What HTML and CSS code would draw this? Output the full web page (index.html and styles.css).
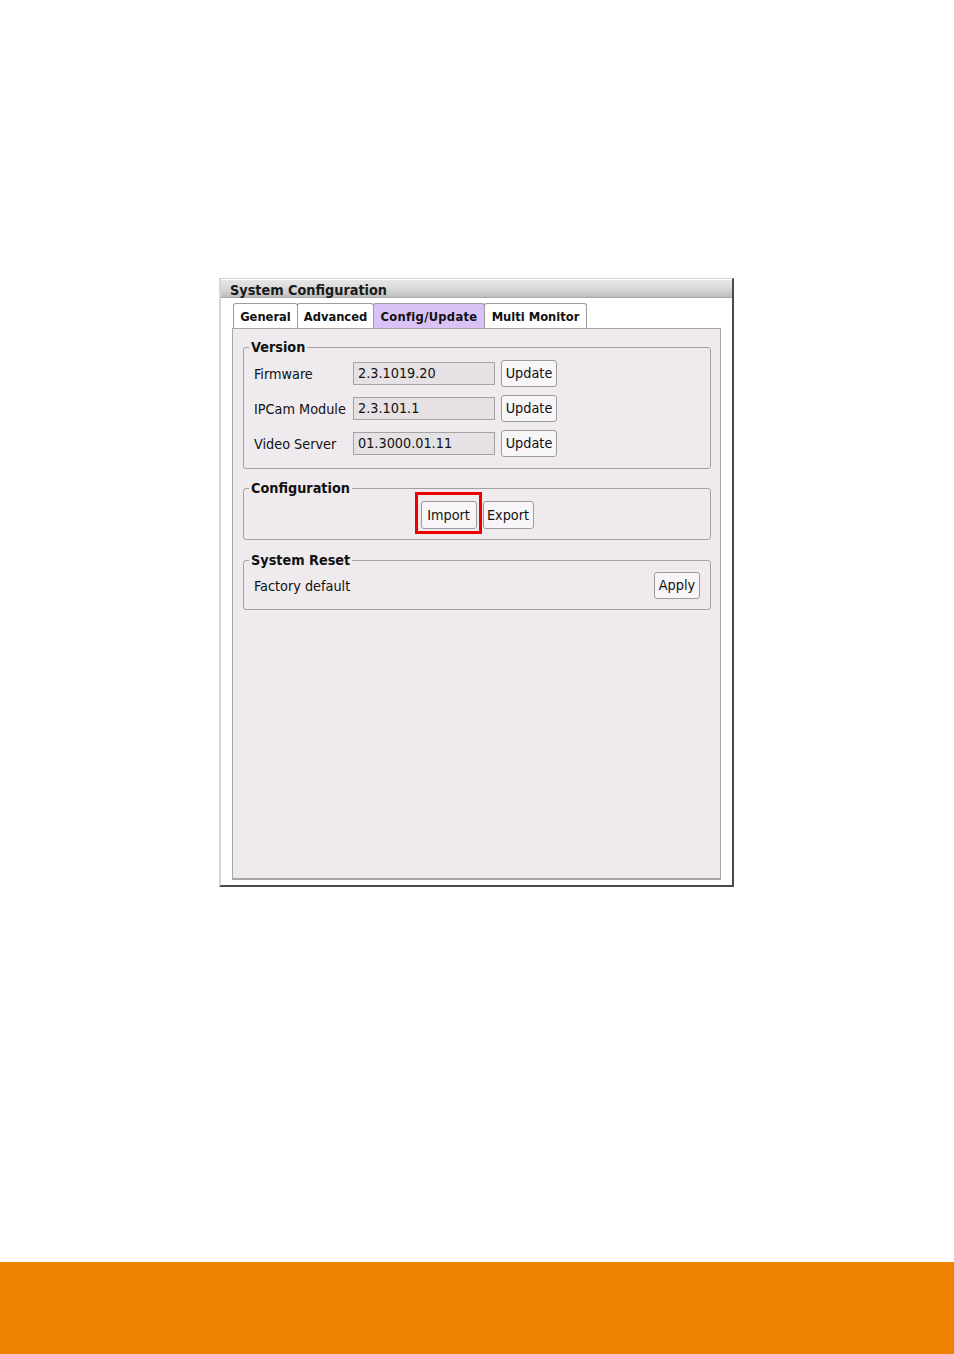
FILE: index.html
```html
<!DOCTYPE html>
<html>
<head>
<meta charset="utf-8">
<title>System Configuration</title>
<link rel="stylesheet" href="styles.css">
</head>
<body>
<div class="page">
  <div class="window">
    <div class="titlebar">System Configuration</div>
    <div class="win-body">
      <div class="tabs">
        <div class="tab tab-general">General</div>
        <div class="tab tab-advanced">Advanced</div>
        <div class="tab tab-config active">Config/Update</div>
        <div class="tab tab-multi">Multi Monitor</div>
      </div>
      <div class="panel">
        <fieldset class="group group-version">
          <legend>Version</legend>
          <div class="version-grid">
            <span class="label">Firmware</span>
            <span class="field">2.3.1019.20</span>
            <button class="btn btn-update">Update</button>
            <span class="label">IPCam Module</span>
            <span class="field">2.3.101.1</span>
            <button class="btn btn-update">Update</button>
            <span class="label">Video Server</span>
            <span class="field">01.3000.01.11</span>
            <button class="btn btn-update">Update</button>
          </div>
        </fieldset>
        <fieldset class="group group-config">
          <legend>Configuration</legend>
          <div class="config-row">
            <span class="highlight">
              <button class="btn btn-import">Import</button>
            </span>
            <button class="btn btn-export">Export</button>
          </div>
        </fieldset>
        <fieldset class="group group-reset">
          <legend>System Reset</legend>
          <div class="reset-row">
            <span class="label">Factory default</span>
            <button class="btn btn-apply">Apply</button>
          </div>
        </fieldset>
      </div>
    </div>
  </div>
</div>
<div class="footer"></div>
</body>
</html>
```
FILE: styles.css
```css
html, body {
  margin: 0;
  padding: 0;
  background: #ffffff;
}

body {
  font-family: "DejaVu Sans Condensed", "DejaVu Sans", sans-serif;
  font-stretch: condensed;
  color: #111;
}

.page {
  height: 1262px;
  box-sizing: border-box;
  padding-top: 278px;
  padding-left: 219px;
}

.window {
  width: 515px;
  height: 609px;
  box-sizing: border-box;
  border-top: 1px solid #d4d4d4;
  border-left: 2px solid #d6d6d6;
  border-right: 2px solid #4a4a4a;
  border-bottom: 2px solid #4a4a4a;
  background: #ffffff;
  display: flex;
  flex-direction: column;
}

.titlebar {
  height: 18px;
  box-sizing: border-box;
  margin-top: 1px;
  padding-left: 9px;
  padding-top: 2px;
  font-size: 14.3px;
  font-weight: bold;
  line-height: 17px;
  color: #1a1a1a;
  background: linear-gradient(#e6e6e6 0%, #dcdcdc 40%, #cdcdcd 75%, #bdbdbd 100%);
  border-bottom: 1px solid #a8a8a8;
  white-space: nowrap;
}

.win-body {
  flex: 1;
  display: flex;
  flex-direction: column;
  padding: 5px 11px 5px 11px;
}

.tabs {
  display: flex;
  height: 25px;
  padding-left: 1px;
}

.tab {
  box-sizing: border-box;
  height: 25px;
  line-height: 25px;
  padding: 0;
  text-align: center;
  border: 1px solid #9c9c9c;
  border-bottom: none;
  border-radius: 3px 3px 0 0;
  margin-right: -1px;
  font-size: 12.8px;
  font-weight: bold;
  background: #ffffff;
  color: #111;
  white-space: nowrap;
}

.tab-general { width: 65px; }
.tab-advanced { width: 77px; }
.tab-config { width: 112px; letter-spacing: 0.3px; }
.tab-multi { width: 103px; }

.tab.active {
  background: #d8c2f6;
}

.panel {
  flex: 1;
  box-sizing: border-box;
  border: 1px solid #a6a6a6;
  border-bottom-width: 2px;
  background: #eeeaee;
  padding: 10px 9px 0 10px;
  display: flex;
  flex-direction: column;
  gap: 11px;
}

.group {
  margin: 0;
  border: 1px solid #a2a2a2;
  border-radius: 3px;
  padding: 0 10px 10px 10px;
  min-width: 0;
}

.group-version {
  padding-bottom: 11px;
}

.group legend {
  font-size: 14.3px;
  font-weight: bold;
  line-height: 17px;
  padding: 0 2px;
  margin-left: -5px;
  color: #111;
}

.group-reset {
  margin-top: 1px;
}

.label {
  font-size: 14.3px;
  color: #111;
  white-space: nowrap;
}

.version-grid {
  margin-top: 4px;
  display: grid;
  grid-template-columns: 93px 142px 56px;
  grid-auto-rows: 27px;
  column-gap: 6px;
  row-gap: 8px;
  align-items: center;
}

.field {
  box-sizing: border-box;
  height: 23px;
  line-height: 21px;
  border: 1px solid #a3a3a3;
  background: #e5e1e5;
  padding-left: 4px;
  font-size: 14.3px;
  color: #111;
}

.btn {
  box-sizing: border-box;
  height: 27px;
  margin: 0;
  padding: 0 3px;
  border: 1px solid #9c9c9c;
  border-radius: 3px;
  background: #f7f5f7;
  font-family: "DejaVu Sans Condensed", "DejaVu Sans", sans-serif;
  font-stretch: condensed;
  font-size: 14.3px;
  color: #111;
  line-height: 25px;
}

.btn-update {
  width: 56px;
}

.config-row {
  margin-top: 4px;
  display: flex;
  justify-content: center;
  align-items: center;
  gap: 6px;
}

.config-row .btn {
  height: 28px;
  display: block;
}

.btn-import {
  width: 56px;
}

.btn-export {
  width: 51px;
}

.highlight {
  position: relative;
  display: block;
}

.highlight::after {
  content: "";
  position: absolute;
  top: -9px;
  bottom: -5px;
  left: -6px;
  right: -5px;
  border: 3px solid #ec0000;
  pointer-events: none;
}

.reset-row {
  margin-top: 3px;
  display: flex;
  justify-content: space-between;
  align-items: center;
}

.btn-apply {
  width: 46px;
}

.footer {
  height: 92px;
  background: #ef8300;
}
```
